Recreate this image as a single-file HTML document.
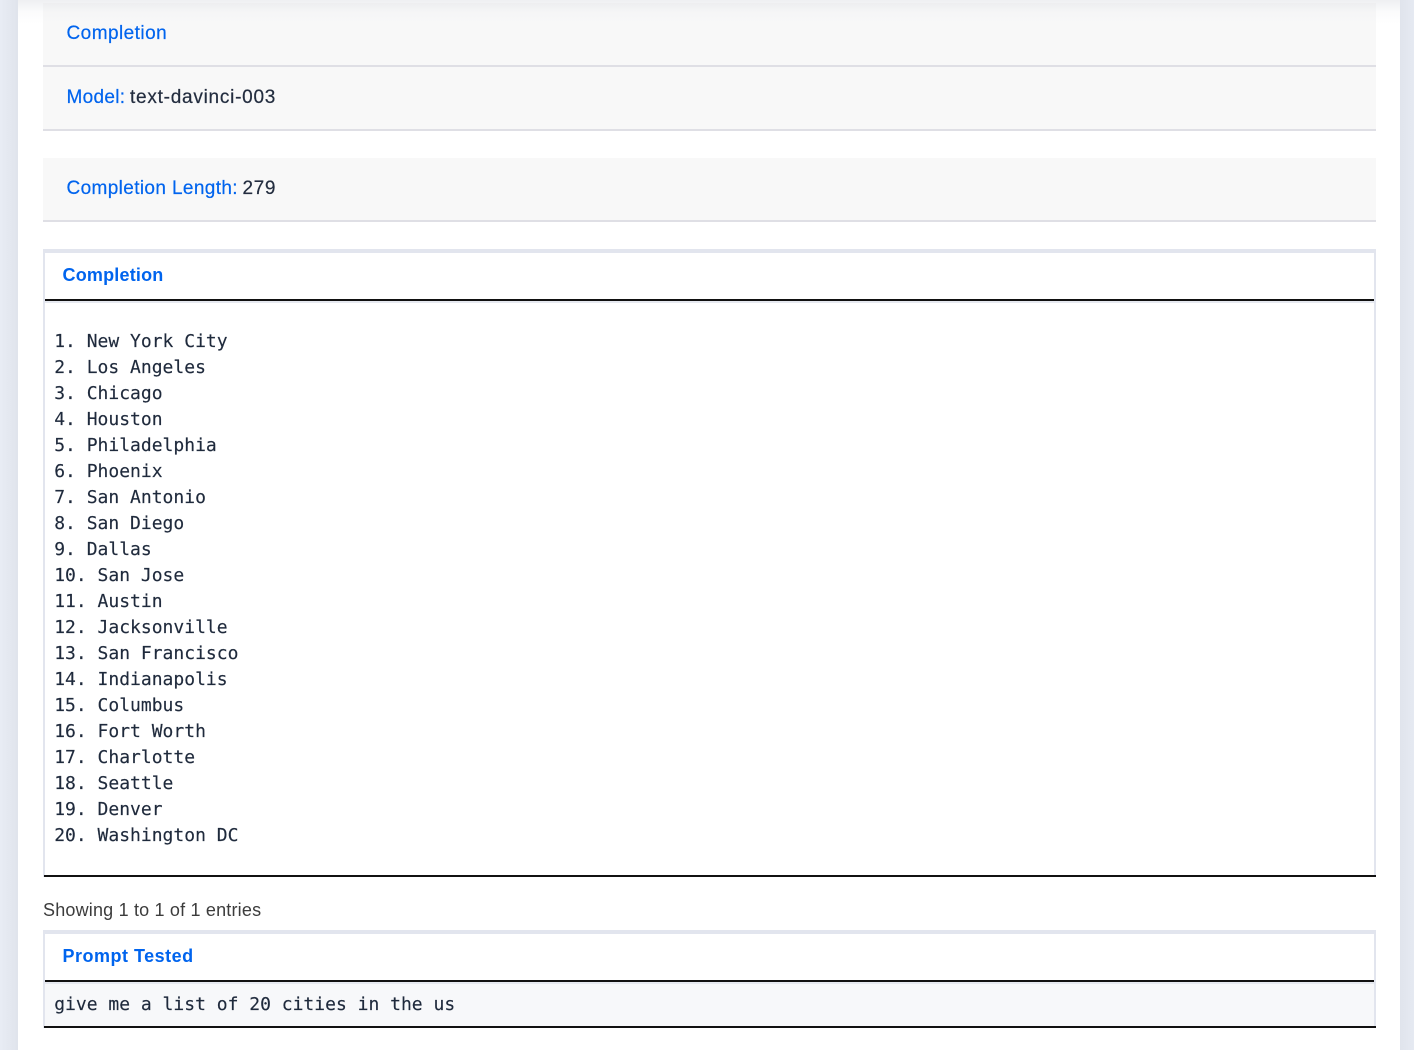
<!DOCTYPE html>
<html><head><meta charset="utf-8"><style>
html,body{margin:0;padding:0;width:1414px;height:1050px;overflow:hidden;background:#fff}
body{position:relative;font-family:"Liberation Sans",sans-serif}
div{position:absolute;box-sizing:border-box}
.t{font-size:19px;line-height:24px;white-space:nowrap;color:#232d3f;-webkit-text-stroke:.2px}
.b{color:#0064ee}
.h{font-size:18px;font-weight:bold;color:#0064ee;-webkit-text-stroke:0}
.m{font-family:"DejaVu Sans Mono","Liberation Mono",monospace;font-size:18px;line-height:26px;color:#1f2a3c;white-space:pre;margin:0;-webkit-text-stroke:.15px}
</style></head><body>
<div style="left:0;top:0;width:18px;height:1050px;background:linear-gradient(90deg,#e8ecf4,#e0e4ec)"></div>
<div style="left:1400px;top:0;width:14px;height:1050px;background:linear-gradient(90deg,#e0e4ec,#e6eaf2)"></div>

<div style="left:43px;top:3px;width:1333px;height:64px;background:#f8f8f8;border-bottom:2px solid #dfdfe5"></div>
<div style="left:43px;top:67px;width:1333px;height:64px;background:#f8f8f8;border-bottom:2px solid #dfdfe5"></div>
<div style="left:43px;top:158px;width:1333px;height:64px;background:#f8f8f8;border-bottom:2px solid #dfdfe5"></div>

<div style="left:18px;top:0;width:1382px;height:24px;background:linear-gradient(180deg,rgba(215,218,224,.42),rgba(235,236,240,.2) 50%,rgba(255,255,255,0))"></div>

<div class="t b" style="left:66.5px;top:22px;letter-spacing:.45px">Completion</div>
<div class="t b" style="left:66.5px;top:86px;letter-spacing:.3px">Model:</div>
<div class="t" style="left:130px;top:86px;letter-spacing:.75px">text-davinci-003</div>
<div class="t b" style="left:66.5px;top:177px;letter-spacing:.37px">Completion Length:</div>
<div class="t" style="left:242.5px;top:177px;letter-spacing:.6px">279</div>

<div style="left:43px;top:249px;width:1333px;height:628px;border:solid #e2e5ee;border-width:4px 2px 0 2px"></div>
<div style="left:45px;top:299px;width:1329px;height:2px;background:#111"></div>
<div style="left:45px;top:301px;width:1329px;height:2px;background:#e6e9f0"></div>
<div style="left:44px;top:875px;width:1332px;height:2px;background:#111"></div>
<div class="t h" style="left:62.5px;top:263px;letter-spacing:.2px">Completion</div>
<pre class="m" style="position:absolute;left:54.2px;top:329px">1. New York City
2. Los Angeles
3. Chicago
4. Houston
5. Philadelphia
6. Phoenix
7. San Antonio
8. San Diego
9. Dallas
10. San Jose
11. Austin
12. Jacksonville
13. San Francisco
14. Indianapolis
15. Columbus
16. Fort Worth
17. Charlotte
18. Seattle
19. Denver
20. Washington DC</pre>

<div class="t" style="left:43px;top:898px;font-size:18px;color:#3c3c3c;letter-spacing:.19px;-webkit-text-stroke:0">Showing 1 to 1 of 1 entries</div>

<div style="left:43px;top:930px;width:1333px;height:98px;border:solid #e2e5ee;border-width:4px 2px 0 2px"></div>
<div style="left:45px;top:982px;width:1329px;height:44px;background:#f7f8fa"></div>
<div style="left:45px;top:980px;width:1329px;height:2px;background:#111"></div>
<div style="left:45px;top:982px;width:1329px;height:2px;background:#e6e9f0"></div>
<div style="left:44px;top:1026px;width:1332px;height:2px;background:#111"></div>
<div class="t h" style="left:62.5px;top:944px;letter-spacing:.5px">Prompt Tested</div>
<pre class="m" style="position:absolute;left:54.2px;top:992px">give me a list of 20 cities in the us</pre>
</body></html>
